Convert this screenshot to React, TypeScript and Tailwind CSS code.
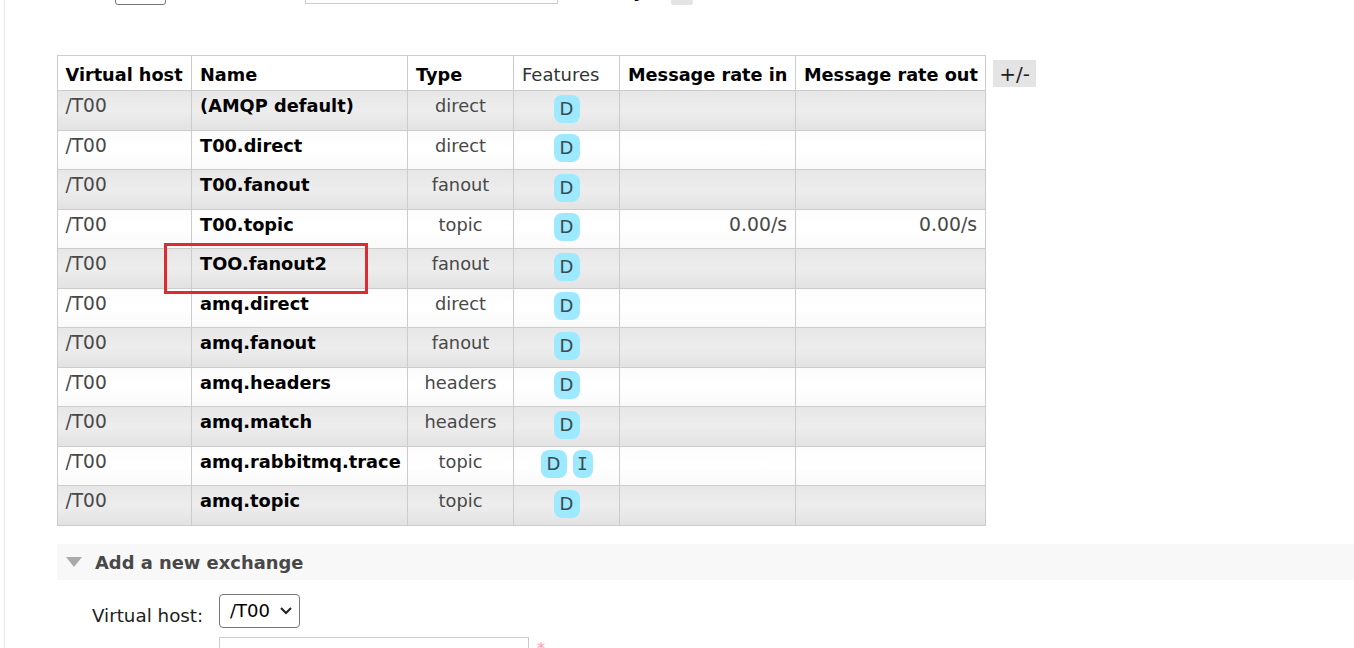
const ROWS = [
  { name: "(AMQP default)", type: "direct", alt: true, flags: ["D"] },
  { name: "T00.direct", type: "direct", alt: false, flags: ["D"] },
  { name: "T00.fanout", type: "fanout", alt: true, flags: ["D"] },
  { name: "T00.topic", type: "topic", alt: false, flags: ["D"], rate: "0.00/s" },
  { name: "TOO.fanout2", type: "fanout", alt: true, flags: ["D"] },
  { name: "amq.direct", type: "direct", alt: false, flags: ["D"] },
  { name: "amq.fanout", type: "fanout", alt: true, flags: ["D"] },
  { name: "amq.headers", type: "headers", alt: false, flags: ["D"] },
  { name: "amq.match", type: "headers", alt: true, flags: ["D"] },
  { name: "amq.rabbitmq.trace", type: "topic", alt: false, flags: ["D", "I"] },
  { name: "amq.topic", type: "topic", alt: true, flags: ["D"] },
];

const HEADERS = [
  { label: "Virtual host", w: "w-[134px]", bold: true },
  { label: "Name", w: "w-[216px]", bold: true },
  { label: "Type", w: "w-[106px]", bold: true },
  { label: "Features", w: "w-[106px]", bold: false },
  { label: "Message rate in", w: "w-[176px]", bold: true },
  { label: "Message rate out", w: "w-[190px]", bold: true },
];

export default function App() {
  return (
    <div className="relative h-[648px] w-[1354px] overflow-hidden bg-white font-['DejaVu_Sans',sans-serif] text-[#484848]">
      <div className="ml-[4px] h-[648px] border-l border-[#e8e8e8]">
        {/* cut-off filter row */}
        <div className="flex h-[5px] items-end overflow-hidden">
          <div className="ml-[110px] h-[10px] w-[51px] shrink-0 rounded-b-[3px] border border-[#767676]" />
          <div className="mb-[1px] ml-[139px] h-[10px] w-[253px] shrink-0 border border-[#ccc]" />
          <span className="mb-[3px] ml-[75px] w-[10px] shrink-0 text-[18px] leading-[22px] font-bold text-black">y</span>
          <div className="ml-[28px] h-[10px] w-[22px] shrink-0 rounded-b-[2px] bg-[#e4e4e4]" />
        </div>

        <div className="mt-[50px] ml-[52px] flex items-start">
          <table className="w-[929px] table-fixed border-collapse text-[17.8px] leading-[22px]">
            <thead>
              <tr className="h-[35px] bg-white">
                {HEADERS.map((h, i) => (
                  <th
                    key={h.label}
                    className={`${h.w} border border-[#ccc] pt-[4px] pr-[4px] text-left whitespace-nowrap ${i === 0 ? "pl-[7.5px]" : "pl-[8px]"} ${h.bold ? "text-[17.7px] font-bold text-black" : "text-[18px] font-normal text-[#333]"}`}
                  >
                    {h.label}
                  </th>
                ))}
              </tr>
            </thead>
            <tbody>
              {ROWS.map((r) => (
                <tr
                  key={r.name}
                  className={`h-[39.5px] ${r.alt ? "bg-linear-to-b from-[#e7e7e7] via-[#ededed] to-[#e2e2e2]" : "bg-linear-to-b from-[#fcfcfc] via-white to-[#f9f9f9]"}`}
                >
                  <td className="border border-[#ccc] pr-[8px] pb-[8px] pl-[7.5px] align-middle text-[18.6px] whitespace-nowrap">/T00</td>
                  <td className="border border-[#ccc] px-[8px] pb-[8px] align-middle font-bold whitespace-nowrap text-black">{r.name}</td>
                  <td className="border border-[#ccc] px-[8px] pb-[8px] text-center align-middle">{r.type}</td>
                  <td className="border border-[#ccc] px-[8px] pb-[3px] text-center align-middle">
                    <div className="flex justify-center gap-[6px]">
                      {r.flags.map((f) => (
                        <span
                          key={f}
                          className={`inline-flex h-[28px] items-center justify-center rounded-[8px] bg-[#9de9ff] text-[18px] text-[#3b4a50] ${f === "I" ? "w-[20px] font-['DejaVu_Sans_Mono',monospace]" : "w-[26px]"}`}
                        >
                          {f}
                        </span>
                      ))}
                    </div>
                  </td>
                  <td className="border border-[#ccc] px-[8px] pb-[8px] text-right align-middle text-[18.8px]">{r.rate}</td>
                  <td className="border border-[#ccc] px-[8px] pb-[8px] text-right align-middle text-[18.8px]">{r.rate}</td>
                </tr>
              ))}
            </tbody>
          </table>
          <span className="mt-[5px] ml-[7px] flex h-[27px] w-[43px] items-center justify-center bg-[#e4e4e4] text-[20px] text-[#222]">
            +/-
          </span>
        </div>

        {/* Add a new exchange */}
        <div className="mt-[18px] ml-[52px] flex h-[36px] items-center bg-[#f8f8f8]">
          <span className="ml-[9px] h-0 w-0 border-x-[8.5px] border-t-[10px] border-x-transparent border-t-[#aaa]" />
          <h2 className="ml-[13px] pt-[4px] text-[17.9px] font-bold text-[#484848]">Add a new exchange</h2>
        </div>

        <div className="mt-[14px] flex items-start">
          <label className="mt-[8px] ml-[87px] w-[127px] text-[18.3px] text-[#222]">Virtual host:</label>
          <div className="flex h-[34px] w-[81px] items-center justify-between rounded-[4px] border border-[#767676] pr-[6px] pl-[10px] text-[18px] text-black">
            /T00
            <svg width="14" height="10" viewBox="0 0 14 10" fill="none" stroke="#222" strokeWidth="2">
              <path d="M2 2l5 5 5-5" />
            </svg>
          </div>
        </div>
        <div className="mt-[8px] ml-[214px] flex">
          <div className="h-[30px] w-[310px] border border-[#ccc]" />
          <span className="ml-[8px] text-[16px] text-[#f4a0b0]">*</span>
        </div>
      </div>

      {/* red annotation box */}
      <div className="absolute top-[243px] left-[164px] h-[51px] w-[204px] border-[3px] border-[#dc2b33]" />
    </div>
  );
}
